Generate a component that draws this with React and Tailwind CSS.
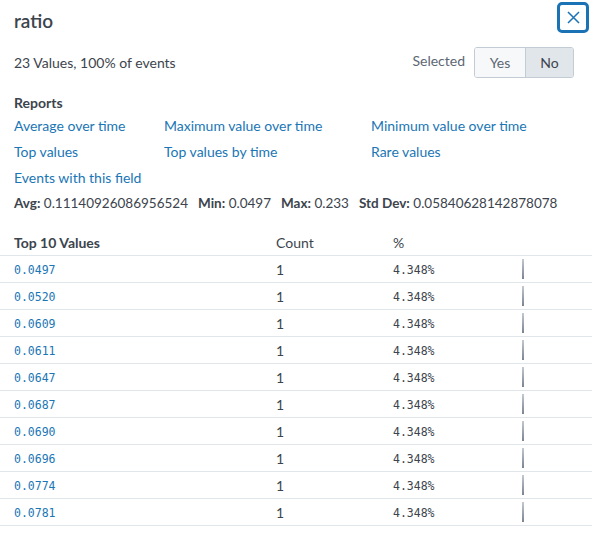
import React from "react";

const rows = ["0.0497", "0.0520", "0.0609", "0.0611", "0.0647", "0.0687", "0.0690", "0.0696", "0.0774", "0.0781"];

const links = [
  "Average over time",
  "Maximum value over time",
  "Minimum value over time",
  "Top values",
  "Top values by time",
  "Rare values",
  "Events with this field",
];

const stats = [
  ["Avg:", "0.11140926086956524"],
  ["Min:", "0.0497"],
  ["Max:", "0.233"],
  ["Std Dev:", "0.05840628142878078"],
];

const App = () => {
  return (
    <div className="w-[592px] h-[536px] bg-white text-[#3c444d] font-['Lato',sans-serif] text-[14px]">
      {/* header */}
      <div className="flex justify-between pl-[14px] pr-[3px]">
        <div className="pt-[10px] text-[19px] leading-[22px] font-semibold">ratio</div>
        <button className="mt-[2px] w-[32px] h-[31px] flex items-center justify-center rounded-[5px] border-[3px] border-[#1b72b4] text-[#1b72b4]">
          <svg width="13" height="13" viewBox="0 0 13 13" fill="none" stroke="currentColor" strokeWidth="1.5">
            <path d="M1 1l11 11M12 1L1 12" />
          </svg>
        </button>
      </div>

      {/* values + selected */}
      <div className="mt-[14px] flex items-center justify-between pl-[14px] pr-[18px]">
        <span>23 Values, 100% of events</span>
        <div className="flex items-center gap-[9px]">
          <span className="text-[#5c6773] -mt-[4px]">Selected</span>
          <div className="flex h-[31px] rounded-[3px] border border-[#c3cbd4] overflow-hidden">
            <button className="w-[51px] bg-[#f7f8fa] text-[#5c6773] border-r border-[#c3cbd4]">Yes</button>
            <button className="w-[47px] bg-[#e1e6eb] text-[#3c444d]">No</button>
          </div>
        </div>
      </div>

      {/* reports */}
      <div className="px-[14px]">
        <div className="mt-[15px] font-bold leading-[20px]">Reports</div>
        <div className="grid grid-cols-[150px_207px_1fr] leading-[26px] text-[#1a76b5]">
          {links.map((l) => (
            <a key={l} href="#">{l}</a>
          ))}
        </div>
        <div className="flex gap-[10px] leading-[24px] text-[13.5px]">
          {stats.map(([k, v]) => (
            <span key={k}>
              <b>{k}</b> {v}
            </span>
          ))}
        </div>
      </div>

      {/* table */}
      <div className="mt-[14px]">
        <div className="grid grid-cols-[276px_117px_129px_1fr] h-[27px] items-center border-b border-[#e1e6eb]">
          <div className="pl-[14px] font-bold">Top 10 Values</div>
          <div>Count</div>
          <div>%</div>
          <div />
        </div>
        {rows.map((v) => (
          <div key={v} className="grid grid-cols-[276px_117px_129px_1fr] h-[27px] items-center border-b border-[#e1e6eb]">
            <div className="pl-[14px] pt-[3px] font-['DejaVu_Sans_Mono',monospace] text-[11.5px] text-[#1a76b5]">{v}</div>
            <div>1</div>
            <div className="pt-[3px] font-['DejaVu_Sans_Mono',monospace] text-[11.5px]">4.348%</div>
            <div>
              <div className="w-[2px] h-[20px] bg-gradient-to-b from-[#c3c9d0] to-[#7b8591]" />
            </div>
          </div>
        ))}
      </div>
    </div>
  );
};

export default App;
